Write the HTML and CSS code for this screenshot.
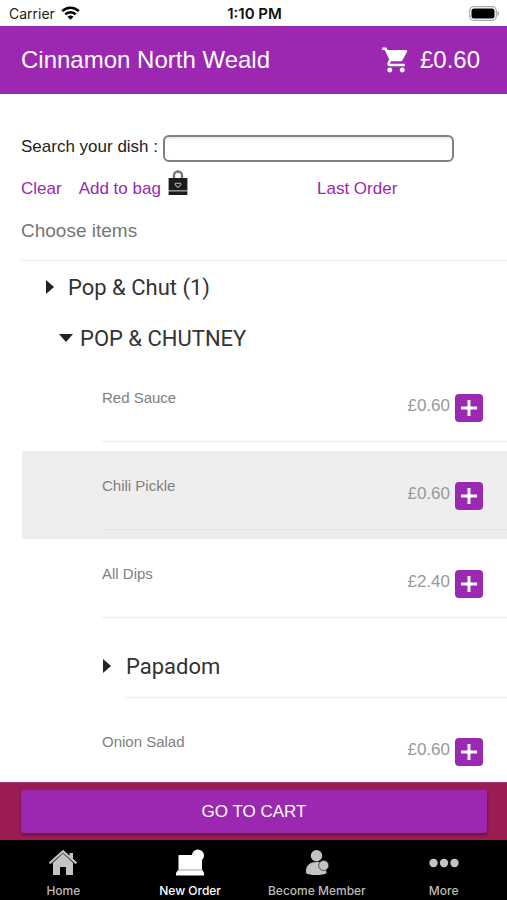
FILE: index.html
```html
<!DOCTYPE html>
<html lang="en">
<head>
<meta charset="utf-8">
<meta name="viewport" content="width=device-width, initial-scale=1">
<title>Cinnamon North Weald</title>
<link rel="stylesheet" href="styles.css">
</head>
<body>
<div class="status">
  <div class="carrier">Carrier
    <svg width="19" height="14" viewBox="0 0 19 14" fill="none" stroke="#000" stroke-width="2.6"><path d="M1.2 5.1a11.8 11.8 0 0 1 16.6 0M4.3 8.4a7.4 7.4 0 0 1 10.4 0"/><path d="M9.5 13.7 6.5 10.8a4.2 4.2 0 0 1 6 0z" fill="#000" stroke="none"/></svg>
  </div>
  <div class="time">1:10 PM</div>
  <div class="battery"><svg width="31" height="15" viewBox="0 0 31 15"><rect x=".7" y=".7" width="26.6" height="13.6" rx="4" fill="#fff" stroke="#aaa" stroke-width="1.2"/><rect x="2.5" y="2.5" width="23" height="10" rx="2.5"/><path d="M28.5 5c2.2.6 2.2 4.4 0 5z" fill="#aaa"/></svg></div>
</div>
<header class="bar">
  <h1>Cinnamon North Weald</h1>
  <a class="cart" href="#cart"><svg width="30" height="30" viewBox="0 0 24 24" fill="#fff"><path d="M7 18c-1.1 0-2 .9-2 2s.9 2 2 2 2-.9 2-2-.9-2-2-2zM1 2v2h2l3.6 7.6-1.35 2.45C4.52 15.37 5.48 17 7 17h12v-2H7.42c-.14 0-.25-.11-.25-.25l.9-1.75h7.45c.75 0 1.41-.41 1.75-1.03L21 5.2A1 1 0 0 0 20 4H5.2l-.9-2H1zm16 16c-1.1 0-2 .9-2 2s.9 2 2 2 2-.9 2-2-.9-2-2-2z"/></svg>£0.60</a>
</header>
<main>
  <div class="search"><label for="dish">Search your dish :</label><input id="dish" type="text"></div>
  <div class="links">
    <div class="left"><a href="#clear">Clear</a><a href="#bag">Add to bag</a>
      <svg class="bag" width="20" height="26" viewBox="0 0 20 26"><path d="M6 9V5.5a4 4 0 0 1 8 0V9" fill="none" stroke="#777" stroke-width="2.4"/><path d="M.6 8h18.800v12.500H.6z" fill="#1c1c1e"/><path d="M.6 21.300h18.800V25H.6z" fill="#1c1c1e"/><path d="M10 17.5 7 14.7c-.5-1.7 1.8-2.1 3-.8 1.2-1.3 3.500-.9 3 .8z" fill="none" stroke="#ddd"/></svg>
    </div>
    <a href="#last">Last Order</a>
  </div>
  <h2>Choose items</h2>
  <div class="menu">
    <button class="group top" aria-expanded="false"><svg width="8" height="14"><path d="M0 0v14l8-7z" fill="#222"/></svg>Pop &amp; Chut (1)</button>
    <button class="group open" aria-expanded="true"><svg width="14" height="8"><path d="M0 0h14L7 8z" fill="#222"/></svg>POP &amp; CHUTNEY</button>
    <div class="item"><div class="line"><span>Red Sauce</span><div class="buy">£0.60<button class="add" aria-label="Add Red Sauce"><svg width="16" height="16"><path d="M8 0v16M0 8h16" stroke="#fff" stroke-width="3"/></svg></button></div></div></div>
    <div class="item active"><div class="line"><span>Chili Pickle</span><div class="buy">£0.60<button class="add" aria-label="Add Chili Pickle"><svg width="16" height="16"><path d="M8 0v16M0 8h16" stroke="#fff" stroke-width="3"/></svg></button></div></div></div>
    <div class="item"><div class="line"><span>All Dips</span><div class="buy">£2.40<button class="add" aria-label="Add All Dips"><svg width="16" height="16"><path d="M8 0v16M0 8h16" stroke="#fff" stroke-width="3"/></svg></button></div></div></div>
    <div class="sub"><button class="group nested" aria-expanded="false"><svg width="8" height="14"><path d="M0 0v14l8-7z" fill="#222"/></svg>Papadom</button></div>
    <div class="item"><div class="line"><span>Onion Salad</span><div class="buy">£0.60<button class="add" aria-label="Add Onion Salad"><svg width="16" height="16"><path d="M8 0v16M0 8h16" stroke="#fff" stroke-width="3"/></svg></button></div></div></div>
  </div>
</main>
<div class="checkout"><button>GO TO CART</button></div>
<nav>
  <a href="#home"><svg width="30" height="28" viewBox="0 0 30 28" fill="#c4c4c4"><path d="M21.500 5H25v8l-3.500-3z"/><path d="M5 14.500 15 5l10 9.500V27h-7v-8h-6v8H5z"/><path d="M3 16.200 15 5.500l12 10.700" fill="none" stroke="#555" stroke-width=".8"/><path d="M1.500 15.200 15 3.200l13.500 12" fill="none" stroke="#c4c4c4" stroke-width="2.200"/></svg>Home</a>
  <a class="current" href="#order"><svg width="30" height="28" viewBox="0 0 30 28" fill="#fff"><path d="M3.500 7H17a6 6 0 1 1 10 5v10H3.500z"/><path d="M3 22h24.500l1.500 3v2.500H1V25z"/><path d="M3 22h24.500" stroke="#888" stroke-width=".8"/></svg>New Order</a>
  <a href="#member"><svg width="30" height="28" viewBox="0 0 30 28" fill="#c4c4c4"><path d="M4 25v-2c0-5 3-9 10.500-9 5 0 8 2 9 5l1 6c-3 2.800-17.500 2.800-20.500 0z"/><circle cx="14.500" cy="7.700" r="5.700"/><circle cx="21.700" cy="17.500" r="5" stroke="#333" stroke-width=".8"/></svg>Become Member</a>
  <a href="#more"><svg width="30" height="28" viewBox="0 0 30 28" fill="#c4c4c4"><circle cx="4.500" cy="15" r="4.200"/><circle cx="15" cy="15" r="4.200"/><circle cx="25.500" cy="15" r="4.200"/></svg>More</a>
</nav>
</body>
</html>
```
FILE: styles.css
```css
* { box-sizing: border-box; }
body {
  margin: 0;
  height: 100vh;
  display: flex;
  flex-direction: column;
  background: #fff;
  color: #222;
  font-family: "Liberation Sans", sans-serif;
}
button { font-family: inherit; border: 0; padding: 0; background: none; color: inherit; }
a { color: #9c27b0; text-decoration: none; }
svg { display: block; flex: none; }

.status {
  flex: none;
  display: grid;
  grid-template-columns: 1fr auto 1fr;
  align-items: center;
  height: 26px;
  padding: 0 7px 0 9px;
  font: 14px Inter, sans-serif;
}
.carrier { display: flex; align-items: center; gap: 6px; }
.time { font-size: 15px; font-weight: 600; color: #111; }
.battery { justify-self: end; }

.bar {
  flex: none;
  display: flex;
  align-items: center;
  justify-content: space-between;
  height: 68px;
  padding: 0 27px 0 21px;
  background: #9c27b0;
  color: #fff;
}
.bar h1 { margin: 0; font-size: 24px; font-weight: 400; }
.cart { display: flex; align-items: center; gap: 9px; color: #fff; font-size: 24px; }

main { flex: 1; min-height: 0; overflow: auto; scrollbar-width: none; padding-top: 41px; }
.search { display: flex; gap: 5px; padding: 0 53px 0 21px; font-size: 17px; line-height: 24px; }
.search input {
  flex: 1;
  min-width: 0;
  height: 27px;
  border: 2px solid #808080;
  border-radius: 6px;
  background: #fff;
  box-shadow: inset 0 2px 0 #eee;
  font-size: 17px;
}
.links {
  display: grid;
  grid-template-columns: 296px 1fr;
  align-items: center;
  height: 40px;
  margin: 7px 0 0 21px;
  font-size: 17px;
}
.left { display: flex; align-items: center; gap: 17px; }
.bag { margin: -12px 0 0 -10px; }
h2 {
  margin: 0 0 0 21px;
  height: 52px;
  border-bottom: 1px solid #eee;
  color: #757575;
  font-size: 19px;
  font-weight: 400;
  line-height: 44px;
}

.menu { margin-left: 22px; }
.group {
  display: flex;
  align-items: center;
  width: 100%;
  height: 52px;
  font: 22px Roboto, sans-serif;
  color: #333;
}
.top { padding-left: 24px; gap: 14px; }
.open { height: 50px; padding-left: 37px; gap: 7px; }
.item { height: 88px; padding-left: 80px; color: #808080; }
.active { background: #eee; }
.line {
  display: flex;
  justify-content: space-between;
  height: 79px;
  padding: 25px 24px 0 0;
  border-bottom: 1px solid #eee;
  font-size: 15px;
  line-height: 20px;
}
.active .line { border-color: #e3e3e3; }
.buy { display: flex; gap: 5px; padding-top: 6px; font-size: 17px; line-height: 24px; color: #999; }
.add {
  display: grid;
  place-items: center;
  width: 28px;
  height: 28px;
  border-radius: 4px;
  background: #9c27b0;
}
.sub { padding: 12px 0 9px 81px; }
.nested { height: 58px; padding-bottom: 4px; gap: 15px; }
.sub::after { content: ""; display: block; height: 1px; margin-left: 22px; background: #eee; }

.checkout { flex: none; padding: 7px 20px 7px 21px; background: #9b1b53; border-top: 1px solid #9b3470; }
.checkout button {
  display: block;
  width: 100%;
  height: 43px;
  border-radius: 3px;
  background: #9c27b0;
  box-shadow: 0 2px 3px #0005;
  color: #fff;
  font-size: 17px;
}
nav { flex: none; display: grid; grid-template-columns: repeat(4, 1fr); height: 60px; background: #000; }
nav a {
  display: flex;
  flex-direction: column;
  align-items: center;
  gap: 5px;
  padding-top: 8px;
  color: #bbb;
  font: 500 12px/20px Inter, sans-serif;
  white-space: nowrap;
}
nav .current { color: #fff; }
```
